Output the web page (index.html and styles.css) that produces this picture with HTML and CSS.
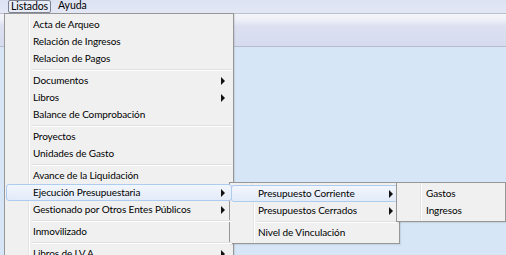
FILE: index.html
```html
<!DOCTYPE html>
<html>
<head>
<meta charset="utf-8">
<link rel="stylesheet" href="styles.css">
</head>
<body>
<div class="app">
  <div class="menubar">
    <span class="mb-item active">Listados</span>
    <span class="mb-item">Ayuda</span>
  </div>
  <div class="toolbar"></div>
  <div class="workspace"></div>
</div>

<div class="menu menu-main">
  <div class="item">Acta de Arqueo</div>
  <div class="item">Relación de Ingresos</div>
  <div class="item">Relacion de Pagos</div>
  <div class="sep"></div>
  <div class="item sub">Documentos<span class="arrow"></span></div>
  <div class="item sub">Libros<span class="arrow"></span></div>
  <div class="item">Balance de Comprobación</div>
  <div class="sep"></div>
  <div class="item">Proyectos</div>
  <div class="item">Unidades de Gasto</div>
  <div class="sep"></div>
  <div class="item">Avance de la Liquidación</div>
  <div class="item sub hl">Ejecución Presupuestaria<span class="arrow"></span></div>
  <div class="item sub">Gestionado por Otros Entes Públicos<span class="arrow"></span></div>
  <div class="sep"></div>
  <div class="item">Inmovilizado</div>
  <div class="sep"></div>
  <div class="item sub">Libros de I.V.A.<span class="arrow"></span></div>
</div>

<div class="menu menu-sub1">
  <div class="item sub hl">Presupuesto Corriente<span class="arrow"></span></div>
  <div class="item sub">Presupuestos Cerrados<span class="arrow"></span></div>
  <div class="sep"></div>
  <div class="item">Nivel de Vinculación</div>
</div>

<div class="menu menu-sub2">
  <div class="item">Gastos</div>
  <div class="item">Ingresos</div>
</div>
</body>
</html>
```

FILE: styles.css
```css
html, body {
  margin: 0;
  padding: 0;
}
body {
  width: 506px;
  height: 255px;
  overflow: hidden;
  position: relative;
  font-family: "Lato", "Open Sans", sans-serif;
  font-size: 10px;
  letter-spacing: -0.1px;
  color: #000;
  background: #d7e6f6;
}
.app {
  display: flex;
  flex-direction: column;
  height: 255px;
}
.menubar {
  height: 13px;
  display: flex;
  align-items: stretch;
  padding-left: 8px;
  gap: 4px;
  background: linear-gradient(#dde2f3, #e3e7f5);
}
.mb-item {
  line-height: 13px;
  padding: 0 2px;
  border: 1px solid transparent;
  border-top: 0;
  margin-top: -1px;
  font-size: 10.5px;
}
.mb-item.active {
  border-color: #7c8290;
  border-top: 1px solid #7c8290;
  border-radius: 2px;
  background: #e8ecf8;
  margin-top: 0;
  line-height: 11px;
}
.toolbar {
  height: 32px;
  border-top: 1px solid #bcc1cf;
  border-bottom: 1px solid #b8bdcc;
  background: linear-gradient(#f5f6fb 0, #eef0f8 6px, #dce0f1 12px, #d6dbef 100%);
}
.workspace {
  flex: 1;
  background: #d7e6f6;
}

.menu {
  position: absolute;
  box-sizing: border-box;
  background-color: #f0f0f0;
  border: 1px solid #979797;
  padding: 2px 1px;
  box-shadow: 1px 1px 1px rgba(0,0,0,0.08);
}
.menu::before {
  content: "";
  position: absolute;
  top: 0;
  bottom: 0;
  left: 23px;
  width: 2px;
  background: linear-gradient(to right, #e2e3e3 1px, #ffffff 1px);
}
.menu-main {
  left: 4px;
  top: 13px;
  width: 230px;
  height: 260px;
}
.menu-sub1 {
  left: 229px;
  top: 182px;
  width: 171px;
}
.menu-sub2 {
  left: 396px;
  top: 182px;
  width: 110px;
  z-index: 2;
}
.item {
  position: relative;
  z-index: 1;
  box-sizing: border-box;
  height: 17px;
  line-height: 17px;
  padding-left: 26px;
  padding-right: 6px;
  display: flex;
  align-items: center;
  justify-content: space-between;
  white-space: nowrap;
  border: 1px solid transparent;
  border-radius: 3px;
}
.menu-sub1 .item {
  padding-right: 4px;
}
.menu-sub2 .item {
  padding-left: 27px;
}
.item.hl {
  border-color: #aecbf0;
  background: linear-gradient(#f2f6fd, #e3ebf9);
}
.arrow {
  width: 0;
  height: 0;
  border-left: 4px solid #111;
  border-top: 4px solid transparent;
  border-bottom: 4px solid transparent;
}
.sep {
  position: relative;
  z-index: 1;
  height: 1px;
  margin: 2px 0 1px 26px;
  border-top: 1px solid #e0e0e0;
  background: #ffffff;
}
```
